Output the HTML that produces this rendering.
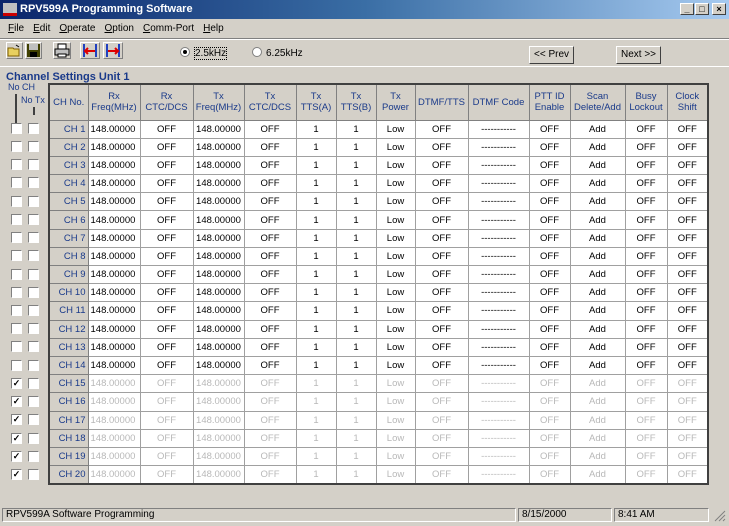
<!DOCTYPE html>
<html><head><meta charset="utf-8"><style>
*{margin:0;padding:0;box-sizing:border-box}
body{width:729px;height:526px;background:#d4d0c8;font-family:"Liberation Sans",sans-serif;font-size:10px;position:relative;overflow:hidden;color:#000}
.title{position:absolute;left:0;top:0;width:729px;height:19px;background:linear-gradient(90deg,#0a246a,#3a6ea5 50%,#a6caf0);color:#fff;font-weight:bold;font-size:11px;line-height:19px;padding-left:20px}
.tb{position:absolute;top:3px;width:14px;height:12px;background:#d4d0c8;border:1px solid;border-color:#fff #404040 #404040 #fff;font-size:9px;line-height:10px;text-align:center;color:#000;font-weight:bold}
.menu{position:absolute;top:21px;left:3px;height:16px;line-height:16px;font-size:10px}
.menu span{margin:0 4px 0 5px}
.sep{position:absolute;left:0;width:729px;height:2px;border-top:1px solid #808080;border-bottom:1px solid #fff}
.ico{position:absolute;top:42px;height:17px;border:1px solid;border-color:#fff #808080 #808080 #fff}
.btn{position:absolute;top:46px;height:18px;border:1px solid;border-color:#fff #404040 #404040 #fff;text-align:center;line-height:16px;font-size:10px}
.rad{position:absolute;top:47px;font-size:10px}
.rad i{display:inline-block;width:10px;height:10px;border-radius:50%;background:#fff;border:1px solid #808080;vertical-align:-1px;margin-right:4px;position:relative}
.rad i.on::after{content:"";position:absolute;left:2px;top:2px;width:4px;height:4px;border-radius:50%;background:#000}
.grp{position:absolute;left:6px;top:71px;color:#1a3a8a;font-weight:bold;font-size:11px}
table{position:absolute;left:48px;top:83px;border-collapse:collapse;border:2px solid #404040;table-layout:fixed}
td,th{border:1px solid #a0a0a0;height:18.2px;font-size:9.5px;text-align:center;white-space:nowrap;overflow:hidden;background:#fff;padding:0}
th{background:#d4d0c8;font-weight:normal;color:#1a3a8a;height:36px;line-height:11px;border-color:#808080}
td.ch{background:#d4d0c8;color:#1a3a8a;text-align:right;padding-right:2px;border-color:#808080}
td.f{text-align:left;padding-left:2px}
tr.g td{color:#b8b8b8}
tr.g td.ch{color:#1a3a8a}
.cb{position:absolute;width:11px;height:11px;background:#fff;border:1px solid;border-color:#808080 #fff #fff #808080;font-size:9px;line-height:9px;text-align:center;font-weight:bold}
.st{position:absolute;top:508px;height:14px;border:1px solid;border-color:#808080 #fff #fff #808080;font-size:10px;line-height:12px;padding-left:3px}
</style></head><body>
<div class="title">RPV599A Programming Software</div>
<div style="position:absolute;left:3px;top:3px;width:14px;height:13px;background:#c0c0c0;border-bottom:3px solid #c00"></div>
<div class="tb" style="left:680px">_</div><div class="tb" style="left:695px">□</div><div class="tb" style="left:712px">×</div>
<div class="menu"><span><u>F</u>ile</span><span><u>E</u>dit</span><span><u>O</u>perate</span><span><u>O</u>ption</span><span><u>C</u>omm-Port</span><span><u>H</u>elp</span></div>
<div class="sep" style="top:38px"></div>
<div class="ico" style="left:6px;width:17px"><svg width="15" height="15"><path d="M1 5h5l1 1h5v7H1z" fill="#e8d060" stroke="#806000"/><path d="M9 2l3 2" stroke="#000"/></svg></div>
<div class="ico" style="left:25px;width:17px"><svg width="15" height="15"><rect x="1" y="1" width="13" height="13" fill="#404000"/><rect x="3" y="1" width="9" height="6" fill="#c0c0c0"/><rect x="4" y="9" width="7" height="5" fill="#000"/></svg></div>
<div class="ico" style="left:53px;width:18px"><svg width="16" height="15"><rect x="4" y="1" width="8" height="5" fill="#fff" stroke="#000"/><rect x="1" y="6" width="14" height="6" fill="#c0c0c0" stroke="#000"/><rect x="4" y="11" width="8" height="3" fill="#fff" stroke="#000"/></svg></div>
<div class="ico" style="left:80px;width:20px"><svg width="18" height="15"><rect x="2" y="1" width="2" height="13" fill="#2040c0"/><rect x="14" y="1" width="2" height="13" fill="#2040c0"/><path d="M4 8h10M7 5l-3 3 3 3" stroke="#e00000" stroke-width="2" fill="none"/></svg></div>
<div class="ico" style="left:103px;width:20px"><svg width="18" height="15"><rect x="2" y="1" width="2" height="13" fill="#2040c0"/><rect x="14" y="1" width="2" height="13" fill="#2040c0"/><path d="M4 8h10M11 5l3 3-3 3" stroke="#e00000" stroke-width="2" fill="none"/></svg></div>
<div class="rad" style="left:180px"><i class="on"></i><span style="border:1px dotted #000">2.5kHz</span></div>
<div class="rad" style="left:252px"><i></i>6.25kHz</div>
<div class="btn" style="left:529px;width:45px">&lt;&lt; Prev</div>
<div class="btn" style="left:616px;width:45px">Next &gt;&gt;</div>
<div style="position:absolute;left:0;top:66px;width:729px;height:1px;background:#fff"></div>
<div class="grp">Channel Settings Unit 1</div>
<div style="position:absolute;left:8px;top:82px;color:#1a3a8a;font-size:9px">No CH</div>
<div style="position:absolute;left:21px;top:95px;color:#1a3a8a;font-size:9px">No Tx</div>
<div style="position:absolute;left:15px;top:94px;width:2px;height:32px;background:#404040"></div>
<div style="position:absolute;left:33px;top:107px;width:2px;height:8px;background:#404040"></div>
<table>
<colgroup><col width="39"><col width="52"><col width="53"><col width="51"><col width="52"><col width="40"><col width="40"><col width="39"><col width="53"><col width="61"><col width="41"><col width="55"><col width="42"><col width="41"></colgroup>
<tr><th>CH No.</th><th>Rx<br>Freq(MHz)</th><th>Rx<br>CTC/DCS</th><th>Tx<br>Freq(MHz)</th><th>Tx<br>CTC/DCS</th><th>Tx<br>TTS(A)</th><th>Tx<br>TTS(B)</th><th>Tx<br>Power</th><th>DTMF/TTS</th><th>DTMF Code</th><th>PTT ID<br>Enable</th><th>Scan<br>Delete/Add</th><th>Busy<br>Lockout</th><th>Clock<br>Shift</th></tr>
<tr><td class="ch">CH 1</td><td class="f">148.00000</td><td>OFF</td><td>148.00000</td><td>OFF</td><td>1</td><td>1</td><td>Low</td><td>OFF</td><td>-----------</td><td>OFF</td><td>Add</td><td>OFF</td><td>OFF</td></tr>
<tr><td class="ch">CH 2</td><td class="f">148.00000</td><td>OFF</td><td>148.00000</td><td>OFF</td><td>1</td><td>1</td><td>Low</td><td>OFF</td><td>-----------</td><td>OFF</td><td>Add</td><td>OFF</td><td>OFF</td></tr>
<tr><td class="ch">CH 3</td><td class="f">148.00000</td><td>OFF</td><td>148.00000</td><td>OFF</td><td>1</td><td>1</td><td>Low</td><td>OFF</td><td>-----------</td><td>OFF</td><td>Add</td><td>OFF</td><td>OFF</td></tr>
<tr><td class="ch">CH 4</td><td class="f">148.00000</td><td>OFF</td><td>148.00000</td><td>OFF</td><td>1</td><td>1</td><td>Low</td><td>OFF</td><td>-----------</td><td>OFF</td><td>Add</td><td>OFF</td><td>OFF</td></tr>
<tr><td class="ch">CH 5</td><td class="f">148.00000</td><td>OFF</td><td>148.00000</td><td>OFF</td><td>1</td><td>1</td><td>Low</td><td>OFF</td><td>-----------</td><td>OFF</td><td>Add</td><td>OFF</td><td>OFF</td></tr>
<tr><td class="ch">CH 6</td><td class="f">148.00000</td><td>OFF</td><td>148.00000</td><td>OFF</td><td>1</td><td>1</td><td>Low</td><td>OFF</td><td>-----------</td><td>OFF</td><td>Add</td><td>OFF</td><td>OFF</td></tr>
<tr><td class="ch">CH 7</td><td class="f">148.00000</td><td>OFF</td><td>148.00000</td><td>OFF</td><td>1</td><td>1</td><td>Low</td><td>OFF</td><td>-----------</td><td>OFF</td><td>Add</td><td>OFF</td><td>OFF</td></tr>
<tr><td class="ch">CH 8</td><td class="f">148.00000</td><td>OFF</td><td>148.00000</td><td>OFF</td><td>1</td><td>1</td><td>Low</td><td>OFF</td><td>-----------</td><td>OFF</td><td>Add</td><td>OFF</td><td>OFF</td></tr>
<tr><td class="ch">CH 9</td><td class="f">148.00000</td><td>OFF</td><td>148.00000</td><td>OFF</td><td>1</td><td>1</td><td>Low</td><td>OFF</td><td>-----------</td><td>OFF</td><td>Add</td><td>OFF</td><td>OFF</td></tr>
<tr><td class="ch">CH 10</td><td class="f">148.00000</td><td>OFF</td><td>148.00000</td><td>OFF</td><td>1</td><td>1</td><td>Low</td><td>OFF</td><td>-----------</td><td>OFF</td><td>Add</td><td>OFF</td><td>OFF</td></tr>
<tr><td class="ch">CH 11</td><td class="f">148.00000</td><td>OFF</td><td>148.00000</td><td>OFF</td><td>1</td><td>1</td><td>Low</td><td>OFF</td><td>-----------</td><td>OFF</td><td>Add</td><td>OFF</td><td>OFF</td></tr>
<tr><td class="ch">CH 12</td><td class="f">148.00000</td><td>OFF</td><td>148.00000</td><td>OFF</td><td>1</td><td>1</td><td>Low</td><td>OFF</td><td>-----------</td><td>OFF</td><td>Add</td><td>OFF</td><td>OFF</td></tr>
<tr><td class="ch">CH 13</td><td class="f">148.00000</td><td>OFF</td><td>148.00000</td><td>OFF</td><td>1</td><td>1</td><td>Low</td><td>OFF</td><td>-----------</td><td>OFF</td><td>Add</td><td>OFF</td><td>OFF</td></tr>
<tr><td class="ch">CH 14</td><td class="f">148.00000</td><td>OFF</td><td>148.00000</td><td>OFF</td><td>1</td><td>1</td><td>Low</td><td>OFF</td><td>-----------</td><td>OFF</td><td>Add</td><td>OFF</td><td>OFF</td></tr>
<tr class="g"><td class="ch">CH 15</td><td class="f">148.00000</td><td>OFF</td><td>148.00000</td><td>OFF</td><td>1</td><td>1</td><td>Low</td><td>OFF</td><td>-----------</td><td>OFF</td><td>Add</td><td>OFF</td><td>OFF</td></tr>
<tr class="g"><td class="ch">CH 16</td><td class="f">148.00000</td><td>OFF</td><td>148.00000</td><td>OFF</td><td>1</td><td>1</td><td>Low</td><td>OFF</td><td>-----------</td><td>OFF</td><td>Add</td><td>OFF</td><td>OFF</td></tr>
<tr class="g"><td class="ch">CH 17</td><td class="f">148.00000</td><td>OFF</td><td>148.00000</td><td>OFF</td><td>1</td><td>1</td><td>Low</td><td>OFF</td><td>-----------</td><td>OFF</td><td>Add</td><td>OFF</td><td>OFF</td></tr>
<tr class="g"><td class="ch">CH 18</td><td class="f">148.00000</td><td>OFF</td><td>148.00000</td><td>OFF</td><td>1</td><td>1</td><td>Low</td><td>OFF</td><td>-----------</td><td>OFF</td><td>Add</td><td>OFF</td><td>OFF</td></tr>
<tr class="g"><td class="ch">CH 19</td><td class="f">148.00000</td><td>OFF</td><td>148.00000</td><td>OFF</td><td>1</td><td>1</td><td>Low</td><td>OFF</td><td>-----------</td><td>OFF</td><td>Add</td><td>OFF</td><td>OFF</td></tr>
<tr class="g"><td class="ch">CH 20</td><td class="f">148.00000</td><td>OFF</td><td>148.00000</td><td>OFF</td><td>1</td><td>1</td><td>Low</td><td>OFF</td><td>-----------</td><td>OFF</td><td>Add</td><td>OFF</td><td>OFF</td></tr>
</table>
<div class="cb" style="left:11px;top:123px"></div><div class="cb" style="left:28px;top:123px"></div>
<div class="cb" style="left:11px;top:141px"></div><div class="cb" style="left:28px;top:141px"></div>
<div class="cb" style="left:11px;top:159px"></div><div class="cb" style="left:28px;top:159px"></div>
<div class="cb" style="left:11px;top:177px"></div><div class="cb" style="left:28px;top:177px"></div>
<div class="cb" style="left:11px;top:196px"></div><div class="cb" style="left:28px;top:196px"></div>
<div class="cb" style="left:11px;top:214px"></div><div class="cb" style="left:28px;top:214px"></div>
<div class="cb" style="left:11px;top:232px"></div><div class="cb" style="left:28px;top:232px"></div>
<div class="cb" style="left:11px;top:250px"></div><div class="cb" style="left:28px;top:250px"></div>
<div class="cb" style="left:11px;top:269px"></div><div class="cb" style="left:28px;top:269px"></div>
<div class="cb" style="left:11px;top:287px"></div><div class="cb" style="left:28px;top:287px"></div>
<div class="cb" style="left:11px;top:305px"></div><div class="cb" style="left:28px;top:305px"></div>
<div class="cb" style="left:11px;top:323px"></div><div class="cb" style="left:28px;top:323px"></div>
<div class="cb" style="left:11px;top:341px"></div><div class="cb" style="left:28px;top:341px"></div>
<div class="cb" style="left:11px;top:360px"></div><div class="cb" style="left:28px;top:360px"></div>
<div class="cb" style="left:11px;top:378px">✓</div><div class="cb" style="left:28px;top:378px"></div>
<div class="cb" style="left:11px;top:396px">✓</div><div class="cb" style="left:28px;top:396px"></div>
<div class="cb" style="left:11px;top:414px">✓</div><div class="cb" style="left:28px;top:414px"></div>
<div class="cb" style="left:11px;top:433px">✓</div><div class="cb" style="left:28px;top:433px"></div>
<div class="cb" style="left:11px;top:451px">✓</div><div class="cb" style="left:28px;top:451px"></div>
<div class="cb" style="left:11px;top:469px">✓</div><div class="cb" style="left:28px;top:469px"></div>
<div class="st" style="left:2px;width:514px">RPV599A Software Programming</div>
<div class="st" style="left:518px;width:94px">8/15/2000</div>
<div class="st" style="left:614px;width:95px">8:41 AM</div>
<svg style="position:absolute;left:714px;top:510px" width="12" height="12"><path d="M11 1L1 11M11 5L5 11M11 9L9 11" stroke="#808080"/></svg>
</body></html>
